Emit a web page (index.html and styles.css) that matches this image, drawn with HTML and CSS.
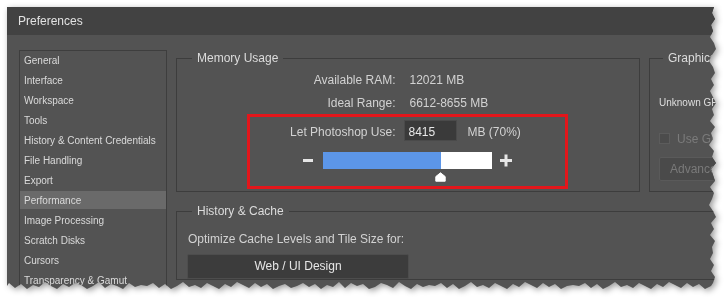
FILE: index.html
```html
<!DOCTYPE html>
<html lang="en">
<head>
<meta charset="utf-8">
<title>Preferences</title>
<link rel="stylesheet" href="styles.css">
</head>
<body>
<div class="frame">
  <div class="window">
    <div class="titlebar">Preferences</div>
    <div class="content">
      <ul class="nav">
        <li>General</li>
        <li>Interface</li>
        <li>Workspace</li>
        <li>Tools</li>
        <li>History &amp; Content Credentials</li>
        <li>File Handling</li>
        <li>Export</li>
        <li class="active">Performance</li>
        <li>Image Processing</li>
        <li>Scratch Disks</li>
        <li>Cursors</li>
        <li>Transparency &amp; Gamut</li>
      </ul>
      <div class="panels">
        <fieldset class="group memory">
          <legend>Memory Usage</legend>
          <div class="mem">
            <div class="row"><span class="label">Available RAM:</span><span class="value">12021 MB</span></div>
            <div class="row second"><span class="label">Ideal Range:</span><span class="value">6612-8655 MB</span></div>
            <div class="highlight">
              <div class="row use">
                <span class="label">Let Photoshop Use:</span>
                <span class="input">8415</span>
                <span class="unit">MB (70%)</span>
              </div>
              <div class="slider">
                <svg class="step" width="10" height="17" viewBox="0 0 10 17"><rect x="0" y="7" width="10" height="3" fill="#e6e6e6"/></svg>
                <div class="track">
                  <div class="bar"><div class="fill" style="width:70%"></div></div>
                  <svg class="thumb" style="margin-left:calc(70% - 5.5px)" width="11" height="10" viewBox="0 0 11 10"><path d="M5.5 0.8 L10.2 4.6 V9.2 H0.8 V4.6 Z" fill="#ffffff" stroke="#ffffff" stroke-width="1" stroke-linejoin="round"/></svg>
                </div>
                <svg class="step" width="12" height="17" viewBox="0 0 12 17"><rect x="0" y="7" width="12" height="3" fill="#e6e6e6"/><rect x="4.5" y="2.5" width="3" height="12" fill="#e6e6e6"/></svg>
              </div>
            </div>
          </div>
        </fieldset>
        <fieldset class="group graphics">
          <legend>Graphics Processor Settings</legend>
          <div class="gpu-name">Unknown GPU</div>
          <div class="check"><span class="box"></span><span class="check-label">Use Graphics Processor</span></div>
          <div class="adv">Advanced Settings...</div>
        </fieldset>
        <fieldset class="group history">
          <legend>History &amp; Cache</legend>
          <div class="optimize">Optimize Cache Levels and Tile Size for:</div>
          <div class="preset">Web / UI Design</div>
        </fieldset>
      </div>
    </div>
  </div>
</div>
</body>
</html>
```
FILE: styles.css
```css
html, body {
  margin: 0;
  padding: 0;
  background: #ffffff;
}

body {
  font-family: "Liberation Sans", Arial, sans-serif;
}

.frame {
  padding: 7px 0 0 7px;
  width: 716px;
  filter: drop-shadow(2px 2px 3px rgba(0, 0, 0, 0.4));
}

.window {
  width: 716px;
  height: 290px;
  background: #535353;
  display: flex;
  flex-direction: column;
  overflow: hidden;
  clip-path: polygon(
    0 0, 707px 0,
    705px 6px, 708px 12px, 704px 18px, 706px 24px, 703px 30px, 707px 36px, 709px 42px, 705px 48px,
    702px 54px, 706px 60px, 708px 66px, 704px 72px, 707px 78px, 703px 84px, 706px 90px, 709px 96px,
    705px 102px, 707px 108px, 703px 114px, 708px 120px, 704px 126px, 706px 132px, 702px 138px,
    707px 144px, 705px 150px, 709px 156px, 704px 162px, 706px 168px, 708px 174px, 703px 180px,
    707px 186px, 705px 192px, 702px 198px, 706px 204px, 709px 210px, 704px 216px, 707px 222px,
    703px 228px, 708px 234px, 705px 240px, 706px 246px, 703px 252px, 707px 258px, 704px 264px,
    708px 270px, 706px 276px,
    704px 279px, 698px 282px, 692px 277px, 686px 280px, 680px 276px, 674px 281px, 668px 278px,
    662px 275px, 656px 280px, 650px 277px, 644px 282px, 638px 279px, 632px 276px, 626px 281px,
    620px 278px, 614px 280px, 608px 275px, 602px 279px, 596px 282px, 590px 277px, 584px 281px,
    578px 276px, 572px 279px, 566px 278px,
    560px 279px, 554px 282px, 548px 277px, 542px 280px, 536px 276px, 530px 281px, 524px 278px,
    518px 275px, 512px 280px, 506px 277px, 500px 282px, 494px 279px, 488px 276px, 482px 281px,
    476px 278px, 470px 280px, 464px 275px, 458px 279px, 452px 282px, 446px 277px, 440px 281px,
    434px 276px, 428px 279px, 422px 278px,
    416px 280px, 410px 277px, 404px 282px, 398px 279px, 392px 275px, 386px 281px, 380px 278px,
    374px 276px, 368px 280px, 362px 282px, 356px 277px, 350px 279px, 344px 276px, 338px 281px,
    332px 275px, 326px 280px, 320px 278px, 314px 282px, 308px 277px, 302px 280px, 296px 276px,
    290px 279px, 284px 281px, 278px 277px,
    272px 279px, 266px 282px, 260px 277px, 254px 280px, 248px 276px, 242px 281px, 236px 278px,
    230px 275px, 224px 280px, 218px 277px, 212px 282px, 206px 279px, 200px 276px, 194px 281px,
    188px 278px, 182px 280px, 176px 275px, 170px 279px, 164px 282px, 158px 277px, 152px 281px,
    146px 276px, 140px 279px, 134px 278px,
    128px 280px, 122px 276px, 116px 282px, 110px 279px, 104px 277px, 98px 281px, 92px 275px,
    86px 279px, 80px 282px, 74px 278px, 68px 276px, 62px 280px, 56px 277px, 50px 282px,
    44px 279px, 38px 275px, 32px 280px, 26px 278px, 20px 282px, 14px 277px, 8px 281px,
    2px 276px, 0 279px
  );
}

.titlebar {
  flex: none;
  box-sizing: border-box;
  height: 28px;
  line-height: 27px;
  padding: 1px 0 0 11px;
  background: #424242;
  color: #e2e2e2;
  font-size: 12px;
}

.content {
  flex: 1;
  min-height: 0;
  display: flex;
  gap: 9px;
  padding: 15px 0 0 12px;
}

.nav {
  flex: none;
  width: 146px;
  margin: 0;
  padding: 0;
  list-style: none;
  border: 1px solid #3e3e3e;
  font-size: 10px;
  color: #dadada;
}

.nav li {
  box-sizing: border-box;
  height: 18px;
  line-height: 18px;
  padding: 1px 0 0 4px;
  margin-bottom: 2px;
  white-space: nowrap;
}

.nav li.active {
  background: #6a6a6a;
}

.panels {
  flex: none;
  display: grid;
  grid-template-columns: 464px 220px;
  column-gap: 9px;
  row-gap: 11px;
  align-content: start;
}

.group {
  margin: 0;
  min-width: 0;
  border: 1px solid #3d3d3d;
  color: #d2d2d2;
  font-size: 12px;
}

.group legend {
  margin-left: 4px;
  padding: 0 5px;
  font-size: 12px;
  line-height: 16px;
  color: #dcdcdc;
  white-space: nowrap;
}

.memory {
  padding: 4px 13px 2px 11px;
}

.mem {
  display: flex;
  flex-direction: column;
  align-items: center;
}

.row {
  box-sizing: border-box;
  width: 315px;
  height: 18px;
  padding-top: 2px;
  display: flex;
  align-items: center;
  white-space: nowrap;
}

.row.second {
  margin-top: 5px;
}

.label {
  flex: none;
  width: 146px;
  text-align: right;
}

.value {
  padding-left: 14px;
}

.highlight {
  margin-top: 3px;
  width: 315px;
  border: 3px solid #e3161b;
  padding: 3px 0 4px;
}

.row.use {
  height: 21px;
  padding-top: 0;
}

.row.use .label,
.row.use .unit {
  padding-top: 2px;
}

.input {
  flex: none;
  box-sizing: border-box;
  width: 53px;
  height: 21px;
  line-height: 20px;
  margin-left: 8px;
  padding: 1px 0 0 4px;
  background: #3a3a3a;
  border: 1px solid #4a4a4a;
  color: #e8e8e8;
}

.unit {
  margin-left: 11px;
}

.slider {
  margin-top: 11px;
  display: flex;
  justify-content: center;
  align-items: flex-start;
}

.step {
  display: block;
  flex: none;
}

.track {
  width: 169px;
  margin: 0 8px 0 10px;
  display: flex;
  flex-direction: column;
}

.bar {
  height: 17px;
  background: #ffffff;
  display: flex;
}

.fill {
  height: 100%;
  background: #5c96e8;
}

.thumb {
  display: block;
  margin-top: 3px;
}

.graphics {
  padding: 0 9px;
  white-space: nowrap;
}

.gpu-name {
  box-sizing: border-box;
  margin-top: 27px;
  height: 18px;
  line-height: 18px;
  padding-top: 1px;
  font-size: 10px;
  color: #dedede;
}

.check {
  margin-top: 18px;
  height: 18px;
  display: flex;
  align-items: center;
}

.box {
  flex: none;
  box-sizing: border-box;
  width: 11px;
  height: 11px;
  background: #4c4c4c;
  border: 1px solid #5c5c5c;
}

.check-label {
  margin-left: 7px;
  padding-top: 2px;
  color: #7b7b7b;
}

.adv {
  margin-top: 10px;
  box-sizing: border-box;
  width: 170px;
  height: 24px;
  line-height: 22px;
  padding-left: 10px;
  background: #4a4a4a;
  border: 1px solid #5a5a5a;
  border-radius: 2px;
  color: #7a7a7a;
}

.history {
  grid-column: 1 / -1;
  padding: 0 11px;
}

.optimize {
  box-sizing: border-box;
  margin-top: 11px;
  height: 16px;
  line-height: 16px;
  padding-top: 1px;
}

.preset {
  margin: 8px 0 0 -1px;
  box-sizing: border-box;
  width: 222px;
  height: 25px;
  line-height: 23px;
  text-align: center;
  background: #3c3c3c;
  border: 1px solid #4d4d4d;
  border-radius: 2px;
  color: #e6e6e6;
}
```
